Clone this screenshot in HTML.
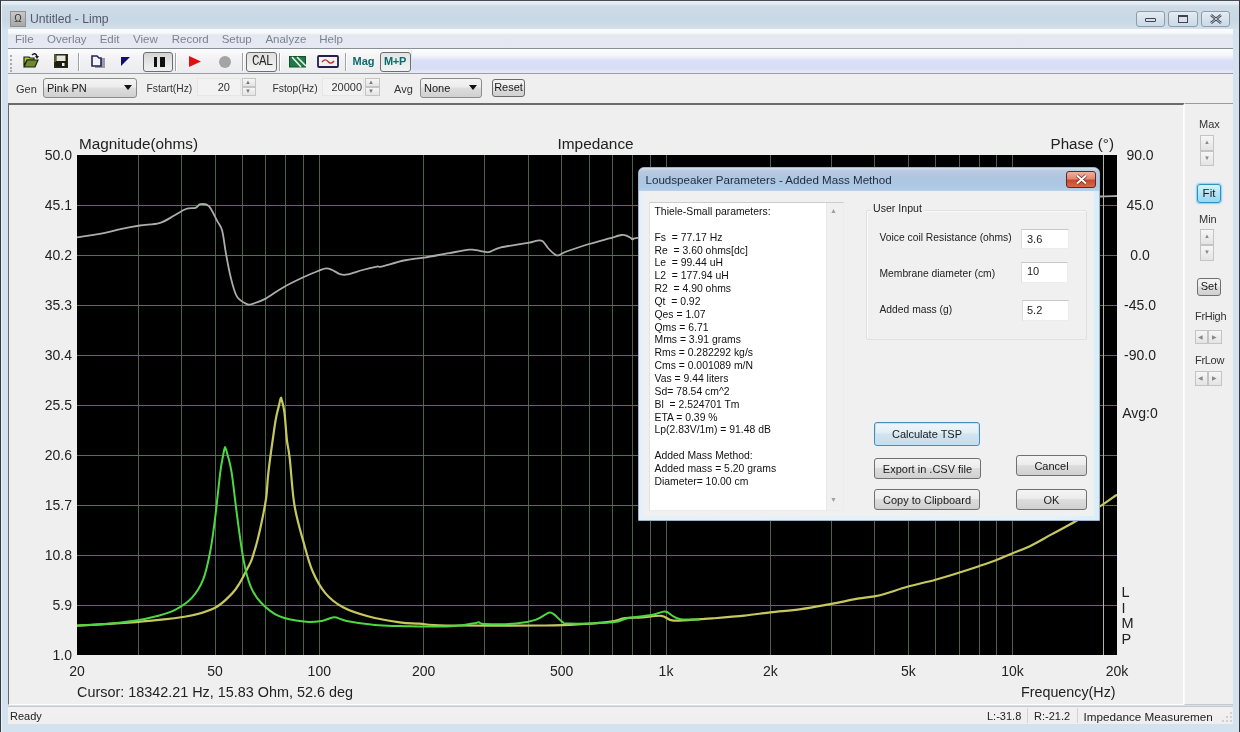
<!DOCTYPE html>
<html><head><meta charset="utf-8">
<style>
html,body{margin:0;padding:0}
body{will-change:transform;width:1240px;height:732px;overflow:hidden;position:relative;background:#f0f0f0;font-family:"Liberation Sans",sans-serif;color:#1e1e1e}
div,span{box-sizing:border-box}
.a{position:absolute}
.t{position:absolute;white-space:nowrap;line-height:1}
.yl{position:absolute;left:20px;width:52px;text-align:right;font-size:14px;line-height:18px;color:#222;white-space:nowrap}
.pl{position:absolute;left:1100px;width:80px;text-align:center;font-size:14px;line-height:18px;color:#222;white-space:nowrap}
.xl{position:absolute;top:662px;width:60px;text-align:center;font-size:14px;line-height:18px;color:#222;white-space:nowrap}
.sep{position:absolute;width:2px;background:#9ea2aa;border-right:1px solid #fff}
.btn{position:absolute;border:1px solid #707070;border-radius:3px;background:linear-gradient(#f4f4f4 0%,#ececec 45%,#dddddd 50%,#d0d0d0 100%);font-size:11px;text-align:center;color:#1a1a1a;white-space:nowrap}
.spin{position:absolute;border:1px solid #c4c4c4;background:linear-gradient(#f6f6f6,#e4e4e4)}
.edit{position:absolute;background:#fff;border:1px solid #ececec;border-top-color:#c8c8c8;border-left-color:#dcdcdc;font-size:11px;white-space:nowrap}
</style></head>
<body>
<!-- window frame -->
<div class="a" style="left:0;top:0;width:1240px;height:732px;background:#d4e1ee"></div>
<div class="a" style="left:1px;top:1px;width:1238px;height:28px;background:linear-gradient(#e9eff5 0px,#e2eaf2 3px,#cddbe7 5px,#c9d8e5 20px,#d3e0ea 28px)"></div>
<div class="a" style="left:0;top:0;width:1240px;height:1px;background:#474d58"></div>
<div class="a" style="left:0;top:0;width:1px;height:732px;background:#353a42"></div>
<div class="a" style="left:1239px;top:0;width:1px;height:732px;background:#353a42"></div>
<div class="a" style="left:1px;top:1px;width:1px;height:731px;background:#eef3f8"></div>
<!-- title -->
<div class="a" style="left:10px;top:11px;width:16px;height:16px;background:linear-gradient(#c8c8c8,#a8a8a8);border:1px solid #909090;font-size:10px;line-height:14px;text-align:center;color:#333">&#937;</div>
<div class="t" style="left:30px;top:13px;font-size:12.2px;color:#525a6a">Untitled - Limp</div>
<div class="a" style="left:1136px;top:11px;width:29px;height:16px;border:1px solid #8e9cab;border-radius:3px;background:linear-gradient(rgba(255,255,255,.5),rgba(200,215,230,.4))"></div>
<div class="a" style="left:1145px;top:18px;width:11px;height:4px;border:1.5px solid #3c4450;border-radius:1px;background:#dde"></div>
<div class="a" style="left:1168px;top:11px;width:30px;height:16px;border:1px solid #8e9cab;border-radius:3px;background:linear-gradient(rgba(255,255,255,.5),rgba(200,215,230,.4))"></div>
<div class="a" style="left:1178px;top:15px;width:10px;height:8px;border:1.5px solid #3c4450;border-top-width:2.5px;background:#dde"></div>
<div class="a" style="left:1201px;top:11px;width:29px;height:16px;border:1px solid #8e9cab;border-radius:3px;background:linear-gradient(rgba(255,255,255,.5),rgba(200,215,230,.4))"></div>
<svg class="a" style="left:1209px;top:13px" width="14" height="12"><path d="M2 2 L12 10 M12 2 L2 10" stroke="#3c4450" stroke-width="2.6"/><path d="M2 2 L12 10 M12 2 L2 10" stroke="#e8eef4" stroke-width="0.8"/></svg>

<!-- menu bar -->
<div class="a" style="left:8px;top:29px;width:1225px;height:20px;background:linear-gradient(#fbfcfd 0px,#f6f8fa 4px,#e4e8f0 6px,#e6e9f1 19px);border-bottom:1px solid #8a9098"></div>
<div class="t" style="left:15px;top:34px;font-size:11.5px;color:#7c8290">File</div>
<div class="t" style="left:47px;top:34px;font-size:11.5px;color:#7c8290">Overlay</div>
<div class="t" style="left:99.7px;top:34px;font-size:11.5px;color:#7c8290">Edit</div>
<div class="t" style="left:133px;top:34px;font-size:11.5px;color:#7c8290">View</div>
<div class="t" style="left:171.7px;top:34px;font-size:11.5px;color:#7c8290">Record</div>
<div class="t" style="left:221.7px;top:34px;font-size:11.5px;color:#7c8290">Setup</div>
<div class="t" style="left:265.4px;top:34px;font-size:11.5px;color:#7c8290">Analyze</div>
<div class="t" style="left:319.3px;top:34px;font-size:11.5px;color:#7c8290">Help</div>

<!-- toolbar 1 -->
<div class="a" style="left:8px;top:49px;width:1225px;height:25px;background:linear-gradient(#fdfdfe 0px,#f6f7fb 6px,#dadef6 12px,#d8dcf4 19px,#e6e8f6 23px);border-bottom:1px solid #9a9ea8"></div>
<div class="a" style="left:8px;top:50px;width:404px;height:23px;background:linear-gradient(#fbfbfc,#f2f2f4 40%,#ececef);border-right:1px solid #e4e4ea"></div>
<div class="a" style="left:10px;top:55px;width:2px;height:2px;background:#a8aab8"></div>
<div class="a" style="left:10px;top:59px;width:2px;height:2px;background:#a8aab8"></div>
<div class="a" style="left:10px;top:63px;width:2px;height:2px;background:#a8aab8"></div>
<div class="a" style="left:10px;top:67px;width:2px;height:2px;background:#a8aab8"></div>
<div class="a" style="left:10px;top:70px;width:2px;height:2px;background:#a8aab8"></div>
<!-- open folder -->
<svg class="a" style="left:22px;top:52px" width="18" height="17"><path d="M2 5 L7 5 L8 6 L12 6 L12 8 L5 8 L2 14 Z" fill="#a6d040" stroke="#1e2410" stroke-width="1.2"/><path d="M5 8 L16 8 L13 15 L2 15 Z" fill="#6e8a2a" stroke="#1e2410" stroke-width="1.2"/><path d="M10 3 Q13 0 15 4" fill="none" stroke="#1a1a1a" stroke-width="1.5"/><path d="M13 4 L17 4 L15 7 Z" fill="#1a1a1a"/></svg>
<!-- save -->
<svg class="a" style="left:54px;top:54px" width="14" height="14"><rect x="0.7" y="0.7" width="12.6" height="12.6" fill="#1c1c10" stroke="#2a2a18" stroke-width="1.4"/><rect x="2.5" y="1.5" width="9" height="5.5" fill="#e8e8d8"/><rect x="0" y="0" width="2" height="8" fill="#5a5a30"/><rect x="8" y="9" width="2.5" height="3" fill="#f4f4f4"/></svg>
<div class="sep" style="left:78px;top:53px;height:18px"></div>
<!-- copy -->
<svg class="a" style="left:91px;top:55px" width="15" height="13"><rect x="4" y="3" width="10" height="10" fill="#9a9aa8"/><path d="M1 1 L6 1 L8 3 L10 3 L10 11 L1 11 Z" fill="#f4f2fa" stroke="#24245a" stroke-width="1.6"/></svg>
<!-- navy triangle -->
<svg class="a" style="left:120px;top:56px" width="12" height="12"><path d="M1 1 L10 1 L1 10 Z" fill="#10106a"/></svg>
<!-- pause button -->
<div class="a" style="left:143px;top:52px;width:30px;height:20px;border:1px solid #6e6e6e;border-radius:3px;background:linear-gradient(#d4d4d4,#e8e8e8 60%,#f0f0f0)"></div>
<div class="a" style="left:154px;top:57px;width:3px;height:10px;background:#111"></div>
<div class="a" style="left:160px;top:57px;width:4.5px;height:10px;background:#111"></div>
<div class="sep" style="left:175px;top:53px;height:18px"></div>
<svg class="a" style="left:188px;top:55px" width="15" height="14"><path d="M1 1 L13 6.5 L1 12 Z" fill="#e01010"/></svg>
<div class="a" style="left:219px;top:55.5px;width:12px;height:12px;border-radius:6px;background:#a4a4a4"></div>
<div class="sep" style="left:242px;top:53px;height:18px"></div>
<div class="a" style="left:246px;top:52px;width:31px;height:20px;border:1px solid #6e6e6e;border-radius:3px;background:linear-gradient(#e0e0e0,#f4f4f4)"></div>
<div class="t" style="left:252px;top:56px;font-family:'Liberation Mono',monospace;font-size:12.5px;color:#2a2a2a;letter-spacing:-0.6px;transform:scaleY(1.12)">CAL</div>
<div class="sep" style="left:279px;top:53px;height:18px"></div>
<svg class="a" style="left:289px;top:56px" width="18" height="12"><rect x="0.5" y="0.5" width="16" height="10.5" fill="#207848" stroke="#145030" stroke-width="1"/><path d="M3 1 L12 11 M8 1 L17 10" stroke="#e8f4e8" stroke-width="1.6"/></svg>
<svg class="a" style="left:317px;top:55px" width="23" height="13"><rect x="1" y="1" width="20" height="11" rx="1" fill="#f6eef4" stroke="#20204a" stroke-width="1.8"/><path d="M5 7 Q8 3 11 6.5 Q14 10 17 6" fill="none" stroke="#b03020" stroke-width="1.3"/></svg>
<div class="sep" style="left:345px;top:53px;height:18px"></div>
<div class="t" style="left:352.5px;top:56px;font-size:11px;font-weight:bold;color:#0f6a6a">Mag</div>
<div class="a" style="left:380px;top:52px;width:31px;height:20px;border:1px solid #6e6e6e;border-radius:3px;background:linear-gradient(#dfe5e5,#f2f4f4)"></div>
<div class="t" style="left:384px;top:56px;font-size:11px;font-weight:bold;color:#0f6a6a;letter-spacing:-0.3px">M+P</div>

<!-- toolbar 2 -->
<div class="a" style="left:8px;top:74px;width:1225px;height:30px;background:#efefef;border-bottom:1px solid #6c6c6c"></div>
<div class="t" style="left:16px;top:84px;font-size:11px;color:#333">Gen</div>
<div class="btn" style="left:43px;top:78px;width:94px;height:20px;text-align:left;padding-left:3px;line-height:19px;border-color:#8c8c8c">Pink PN</div>
<svg class="a" style="left:124px;top:85px" width="9" height="6"><path d="M0 0 L8 0 L4 5 Z" fill="#111"/></svg>
<div class="t" style="left:146.5px;top:84px;font-size:10.3px;color:#333">Fstart(Hz)</div>
<div class="a" style="left:197px;top:78px;width:44px;height:18px;background:#f2f2f2;border:1px solid #e6e6e6"></div>
<div class="t" style="left:197px;top:82px;width:33px;text-align:right;font-size:11px;color:#333">20</div>
<div class="spin" style="left:241.5px;top:78px;width:14px;height:9px"></div>
<div class="spin" style="left:241.5px;top:87px;width:14px;height:9px"></div>
<div class="t" style="left:245px;top:79px;font-size:6px;color:#777">&#9650;</div>
<div class="t" style="left:245px;top:88px;font-size:6px;color:#777">&#9660;</div>
<div class="t" style="left:272.5px;top:84px;font-size:10.3px;color:#333">Fstop(Hz)</div>
<div class="a" style="left:322px;top:78px;width:42px;height:18px;background:#f2f2f2;border:1px solid #e6e6e6"></div>
<div class="t" style="left:322px;top:82px;width:40px;text-align:right;font-size:11px;color:#333">20000</div>
<div class="spin" style="left:364.5px;top:78px;width:15px;height:9px"></div>
<div class="spin" style="left:364.5px;top:87px;width:15px;height:9px"></div>
<div class="t" style="left:368px;top:79px;font-size:6px;color:#777">&#9650;</div>
<div class="t" style="left:368px;top:88px;font-size:6px;color:#777">&#9660;</div>
<div class="t" style="left:394px;top:84px;font-size:11px;color:#333">Avg</div>
<div class="btn" style="left:420px;top:78px;width:62px;height:20px;text-align:left;padding-left:3px;line-height:19px;border-color:#8c8c8c">None</div>
<svg class="a" style="left:469px;top:85px" width="9" height="6"><path d="M0 0 L8 0 L4 5 Z" fill="#111"/></svg>
<div class="btn" style="left:492px;top:79px;width:33px;height:18px;line-height:15px;border-color:#6a6a6a">Reset</div>

<!-- chart panel -->
<div class="a" style="left:8px;top:104px;width:1176px;height:601px;background:#efefef;border-left:1px solid #6a6a6a;border-top:1px solid #6a6a6a;border-right:1px solid #fff;border-bottom:1px solid #fff"></div>
<!-- right panel -->
<div class="a" style="left:1184px;top:103px;width:49px;height:602px;background:#efefef;border-left:1px solid #fafafa;border-top:1px solid #9a9a9a;border-bottom:1px solid #c8c8c8"></div>

<svg width="1240" height="732" style="position:absolute;left:0;top:0">
<defs><clipPath id="pc"><rect x="77" y="155" width="1040" height="500"/></clipPath></defs>
<rect x="77" y="155" width="1040" height="500" fill="#000"/>
<g clip-path="url(#pc)">
<line x1="138.5" y1="155" x2="138.5" y2="655" stroke="#4f6249" stroke-width="1"/>
<line x1="181.5" y1="155" x2="181.5" y2="655" stroke="#4f6249" stroke-width="1"/>
<line x1="215.5" y1="155" x2="215.5" y2="655" stroke="#4f6249" stroke-width="1"/>
<line x1="242.5" y1="155" x2="242.5" y2="655" stroke="#4f6249" stroke-width="1"/>
<line x1="265.5" y1="155" x2="265.5" y2="655" stroke="#4f6249" stroke-width="1"/>
<line x1="285.5" y1="155" x2="285.5" y2="655" stroke="#4f6249" stroke-width="1"/>
<line x1="303.5" y1="155" x2="303.5" y2="655" stroke="#4f6249" stroke-width="1"/>
<line x1="319.5" y1="155" x2="319.5" y2="655" stroke="#4f6249" stroke-width="1"/>
<line x1="423.5" y1="155" x2="423.5" y2="655" stroke="#4f6249" stroke-width="1"/>
<line x1="484.5" y1="155" x2="484.5" y2="655" stroke="#4f6249" stroke-width="1"/>
<line x1="528.5" y1="155" x2="528.5" y2="655" stroke="#4f6249" stroke-width="1"/>
<line x1="561.5" y1="155" x2="561.5" y2="655" stroke="#4f6249" stroke-width="1"/>
<line x1="589.5" y1="155" x2="589.5" y2="655" stroke="#4f6249" stroke-width="1"/>
<line x1="612.5" y1="155" x2="612.5" y2="655" stroke="#4f6249" stroke-width="1"/>
<line x1="632.5" y1="155" x2="632.5" y2="655" stroke="#4f6249" stroke-width="1"/>
<line x1="650.5" y1="155" x2="650.5" y2="655" stroke="#4f6249" stroke-width="1"/>
<line x1="666.5" y1="155" x2="666.5" y2="655" stroke="#4f6249" stroke-width="1"/>
<line x1="770.5" y1="155" x2="770.5" y2="655" stroke="#4f6249" stroke-width="1"/>
<line x1="831.5" y1="155" x2="831.5" y2="655" stroke="#4f6249" stroke-width="1"/>
<line x1="874.5" y1="155" x2="874.5" y2="655" stroke="#4f6249" stroke-width="1"/>
<line x1="908.5" y1="155" x2="908.5" y2="655" stroke="#4f6249" stroke-width="1"/>
<line x1="935.5" y1="155" x2="935.5" y2="655" stroke="#4f6249" stroke-width="1"/>
<line x1="959.5" y1="155" x2="959.5" y2="655" stroke="#4f6249" stroke-width="1"/>
<line x1="979.5" y1="155" x2="979.5" y2="655" stroke="#4f6249" stroke-width="1"/>
<line x1="996.5" y1="155" x2="996.5" y2="655" stroke="#4f6249" stroke-width="1"/>
<line x1="1012.5" y1="155" x2="1012.5" y2="655" stroke="#4f6249" stroke-width="1"/>
<line x1="77" y1="205.5" x2="1117" y2="205.5" stroke="#4e784c" stroke-width="1"/>
<line x1="77" y1="255.5" x2="1117" y2="255.5" stroke="#4e784c" stroke-width="1"/>
<line x1="77" y1="305.5" x2="1117" y2="305.5" stroke="#4e784c" stroke-width="1"/>
<line x1="77" y1="355.5" x2="1117" y2="355.5" stroke="#4e784c" stroke-width="1"/>
<line x1="77" y1="405.5" x2="1117" y2="405.5" stroke="#4e784c" stroke-width="1"/>
<line x1="77" y1="455.5" x2="1117" y2="455.5" stroke="#4e784c" stroke-width="1"/>
<line x1="77" y1="505.5" x2="1117" y2="505.5" stroke="#4e784c" stroke-width="1"/>
<line x1="77" y1="555.5" x2="1117" y2="555.5" stroke="#4e784c" stroke-width="1"/>
<line x1="77" y1="605.5" x2="1117" y2="605.5" stroke="#4e784c" stroke-width="1"/>
<line x1="1103.5" y1="155" x2="1103.5" y2="655" stroke="#b8b898" stroke-width="1"/>
<path d="M77.0,237.3 C81.0,236.7 94.0,235.1 101.2,233.7 C108.5,232.3 114.0,230.5 120.5,229.1 C127.0,227.7 133.4,226.5 139.9,225.5 C146.4,224.5 153.7,224.7 159.3,223.1 C165.0,221.5 169.4,218.2 173.8,215.8 C178.2,213.5 182.3,210.3 185.9,209.0 C189.5,207.7 193.2,208.6 195.6,207.8 C198.0,207.0 198.2,204.5 200.4,204.2 C202.6,203.9 206.1,203.3 208.9,206.1 C211.7,208.9 215.1,217.0 217.3,221.1 C219.5,225.2 220.8,225.6 222.2,230.8 C223.6,236.1 224.4,244.9 225.8,252.6 C227.2,260.3 228.8,269.6 230.6,276.8 C232.4,284.1 234.1,291.6 236.7,296.1 C239.3,300.6 243.8,302.6 246.4,303.9 C249.0,305.2 249.2,304.8 252.4,303.9 C255.6,303.0 260.6,301.3 265.7,298.6 C270.8,295.9 276.2,291.3 282.7,287.7 C289.1,284.1 298.3,279.6 304.4,276.8 C310.4,274.0 315.4,272.1 319.0,270.7 C322.6,269.3 324.0,268.4 326.2,268.3 C328.4,268.2 329.9,269.0 332.3,270.0 C334.7,271.0 338.1,273.7 340.7,274.4 C343.3,275.1 344.4,275.1 348.0,274.4 C351.6,273.7 357.7,271.3 362.5,270.0 C367.3,268.7 373.9,267.2 377.0,266.6 C380.1,266.0 376.8,267.6 381.3,266.6 C385.8,265.6 396.8,262.0 403.9,260.5 C411.0,259.0 416.7,258.8 424.2,257.6 C431.7,256.4 441.5,254.4 449.0,253.1 C456.5,251.8 464.8,250.2 469.3,249.7 C473.8,249.2 473.5,249.7 476.1,250.1 C478.8,250.5 482.9,251.6 485.2,251.9 C487.5,252.2 487.1,252.7 489.7,251.9 C492.3,251.2 494.6,248.9 501.0,247.4 C507.4,245.9 522.0,244.0 528.0,242.9 C534.0,241.8 534.6,240.9 537.1,240.6 C539.6,240.3 540.8,240.0 542.7,241.3 C544.6,242.6 546.3,246.3 548.4,248.5 C550.5,250.7 553.4,253.5 555.1,254.6 C556.8,255.7 556.6,255.8 558.5,255.3 C560.4,254.8 561.3,253.4 566.4,251.5 C571.5,249.6 581.9,246.2 589.0,244.0 C596.1,241.8 603.8,239.9 609.3,238.4 C614.8,236.9 618.7,235.4 621.7,235.0 C624.7,234.6 625.5,235.4 627.4,236.1 C629.3,236.8 631.3,238.8 633.0,239.1 C634.7,239.4 626.4,239.4 637.6,237.9 C648.8,236.4 656.3,234.3 700.0,230.0 C743.7,225.7 835.8,217.3 900.0,212.0 C964.2,206.7 1051.7,200.6 1085.0,198.0 C1118.3,195.4 1094.7,196.8 1100.0,196.5 C1105.3,196.2 1114.2,196.1 1117.0,196.0" fill="none" stroke="#acacac" stroke-width="1.8" stroke-linejoin="round"/>
<path d="M77.0,625.7 C84.2,625.3 108.0,623.9 120.0,623.1 C131.9,622.3 137.7,621.9 148.7,620.8 C159.7,619.7 175.0,618.6 186.0,616.5 C197.0,614.4 207.0,611.7 214.7,607.9 C222.4,604.1 227.8,597.8 232.0,593.6 C236.2,589.4 237.1,587.3 240.0,582.5 C242.9,577.7 247.1,569.0 249.2,564.9 C251.3,560.8 251.0,561.9 252.4,557.6 C253.8,553.3 256.1,545.9 257.8,539.0 C259.5,532.1 261.4,523.7 262.8,516.5 C264.2,509.3 265.5,503.4 266.4,496.0 C267.3,488.6 267.3,481.7 268.4,472.4 C269.4,463.1 271.4,449.1 272.7,440.0 C274.0,430.9 274.9,423.9 276.0,418.0 C277.1,412.1 278.4,408.0 279.1,404.9 C279.8,401.8 280.0,400.7 280.3,399.5 C280.6,398.3 280.7,397.8 280.9,397.8 C281.1,397.8 281.0,397.1 281.6,399.5 C282.2,401.9 283.5,405.2 284.4,412.0 C285.3,418.8 286.0,432.3 286.9,440.0 C287.8,447.7 288.4,447.3 289.7,458.2 C291.0,469.1 292.1,491.4 294.5,505.6 C296.9,519.8 300.8,532.4 303.9,543.4 C306.9,554.4 309.2,563.5 312.8,571.8 C316.4,580.1 320.3,587.2 325.3,593.1 C330.3,599.0 335.9,603.4 343.0,607.3 C350.1,611.1 358.4,613.7 367.9,616.2 C377.4,618.7 391.3,621.1 399.9,622.3 C408.5,623.5 411.7,623.1 419.4,623.6 C427.1,624.1 425.0,625.2 446.0,625.5 C467.0,625.8 522.2,625.8 545.2,625.5 C568.2,625.2 573.0,624.6 583.9,624.0 C594.8,623.4 603.6,622.6 610.5,621.6 C617.4,620.6 619.8,618.9 625.0,618.2 C630.2,617.5 636.0,617.9 642.0,617.5 C648.0,617.1 656.1,615.3 661.3,615.8 C666.5,616.3 666.9,620.0 673.4,620.6 C679.9,621.2 693.5,619.6 700.0,619.2 C706.5,618.8 704.9,619.0 712.3,618.4 C719.7,617.8 734.8,616.6 744.5,615.6 C754.2,614.6 760.9,613.5 770.3,612.4 C779.7,611.3 790.8,610.6 801.0,609.2 C811.2,607.8 822.2,605.6 831.6,603.9 C841.0,602.1 849.3,600.2 857.4,598.7 C865.5,597.2 871.7,597.2 880.0,595.2 C888.3,593.2 898.0,589.4 907.3,586.8 C916.5,584.2 926.9,582.1 935.5,579.7 C944.1,577.4 951.5,575.0 958.7,572.7 C965.9,570.5 972.7,568.3 978.9,566.2 C985.1,564.1 990.5,562.3 996.0,560.2 C1001.5,558.1 1006.2,556.0 1012.1,553.5 C1018.0,551.0 1024.7,548.6 1031.3,545.4 C1037.9,542.2 1044.1,538.4 1051.5,534.4 C1058.9,530.4 1067.2,526.2 1075.6,521.3 C1084.0,516.4 1095.3,509.3 1101.9,505.1 C1108.5,500.9 1112.5,497.8 1115.0,496.0 C1117.5,494.2 1116.7,494.8 1117.0,494.6" fill="none" stroke="#c6c85e" stroke-width="2.2" stroke-linejoin="round"/>
<path d="M77.0,625.7 C81.8,625.4 96.1,624.8 105.7,624.0 C115.3,623.2 125.8,622.1 134.4,620.8 C143.0,619.5 150.6,617.8 157.3,616.0 C164.0,614.2 168.8,613.2 174.6,610.2 C180.3,607.2 187.0,603.1 191.8,597.9 C196.6,592.7 200.2,587.1 203.3,579.2 C206.4,571.3 208.4,561.0 210.4,550.5 C212.4,540.0 213.7,529.5 215.3,516.5 C216.9,503.6 218.9,483.1 220.2,472.8 C221.5,462.6 222.5,459.0 223.2,455.0 C223.9,451.0 224.1,450.3 224.4,449.0 C224.7,447.7 224.8,447.1 225.1,447.1 C225.3,447.1 225.5,447.7 225.9,449.0 C226.3,450.3 226.6,451.0 227.6,455.0 C228.6,459.0 230.1,462.6 231.7,472.8 C233.3,483.1 235.2,502.1 237.2,516.5 C239.1,530.9 241.2,547.5 243.4,559.1 C245.6,570.8 247.7,579.2 250.6,586.4 C253.5,593.6 255.9,597.2 260.6,602.2 C265.4,607.2 271.9,613.0 279.1,616.2 C286.3,619.4 296.8,620.8 303.9,621.6 C311.0,622.4 316.7,621.6 321.7,620.9 C326.7,620.2 330.0,617.3 334.1,617.3 C338.2,617.3 339.8,619.6 346.6,620.9 C353.4,622.2 366.1,624.2 375.0,625.1 C383.9,626.0 388.2,625.8 400.0,626.0 C411.8,626.2 433.9,626.9 446.0,626.5 C458.1,626.1 467.2,624.3 472.6,623.6 C478.0,622.9 476.6,622.2 478.6,622.3 C480.6,622.4 478.4,623.8 484.7,624.0 C490.9,624.2 507.6,624.3 516.1,623.6 C524.6,622.9 530.0,621.7 535.5,619.9 C541.0,618.1 545.6,613.5 548.8,612.7 C552.0,611.9 552.7,613.6 554.9,615.1 C557.1,616.6 559.7,620.2 562.1,621.6 C564.5,623.0 560.9,623.5 569.4,623.6 C577.9,623.7 603.2,623.2 612.9,622.3 C622.6,621.4 620.9,619.4 627.4,618.2 C633.9,617.0 645.4,616.2 651.6,615.1 C657.9,614.0 661.3,611.3 664.9,611.5 C668.5,611.7 670.8,615.0 673.4,616.3 C676.0,617.6 676.3,618.7 680.7,619.2 C685.1,619.8 696.8,619.5 700.0,619.6" fill="none" stroke="#4cd840" stroke-width="2" stroke-linejoin="round"/>
</g></svg>
<div class="t" style="left:79px;top:136px;font-size:15.3px;color:#222">Magnitude(ohms)</div>
<div class="t" style="left:557.5px;top:136px;font-size:15.4px;color:#222">Impedance</div>
<div class="t" style="left:1050.5px;top:136px;font-size:15.2px;color:#222">Phase (&deg;)</div>
<div class="yl" style="top:146px">50.0</div>
<div class="yl" style="top:196px">45.1</div>
<div class="yl" style="top:246px">40.2</div>
<div class="yl" style="top:296px">35.3</div>
<div class="yl" style="top:346px">30.4</div>
<div class="yl" style="top:396px">25.5</div>
<div class="yl" style="top:446px">20.6</div>
<div class="yl" style="top:496px">15.7</div>
<div class="yl" style="top:546px">10.8</div>
<div class="yl" style="top:596px">5.9</div>
<div class="yl" style="top:646px">1.0</div>
<div class="pl" style="top:146px">90.0</div>
<div class="pl" style="top:196px">45.0</div>
<div class="pl" style="top:246px">0.0</div>
<div class="pl" style="top:296px">-45.0</div>
<div class="pl" style="top:346px">-90.0</div>
<div class="pl" style="top:404px">Avg:0</div>
<div class="xl" style="left:47.0px">20</div>
<div class="xl" style="left:185.0px">50</div>
<div class="xl" style="left:289.3px">100</div>
<div class="xl" style="left:393.7px">200</div>
<div class="xl" style="left:531.6px">500</div>
<div class="xl" style="left:636.0px">1k</div>
<div class="xl" style="left:740.3px">2k</div>
<div class="xl" style="left:878.3px">5k</div>
<div class="xl" style="left:982.6px">10k</div>
<div class="xl" style="left:1087.0px">20k</div>
<div class="t" style="left:1121.5px;top:585px;width:16px;text-align:left;font-size:14.5px;line-height:15.6px;color:#222;white-space:normal">L<br>I<br>M<br>P</div>
<div class="t" style="left:77px;top:685px;font-size:14.4px;color:#222">Cursor: 18342.21 Hz, 15.83 Ohm, 52.6 deg</div>
<div class="t" style="left:1021px;top:685px;font-size:14.3px;color:#222">Frequency(Hz)</div>

<!-- right panel controls -->
<div class="t" style="left:1199px;top:119px;font-size:11px;color:#333">Max</div>
<div class="spin" style="left:1200px;top:135px;width:14px;height:16px"></div>
<div class="spin" style="left:1200px;top:151px;width:14px;height:15px"></div>
<div class="t" style="left:1204px;top:139px;font-size:6px;color:#888">&#9650;</div>
<div class="t" style="left:1204px;top:155px;font-size:6px;color:#888">&#9660;</div>
<div class="btn" style="left:1197px;top:184px;width:24px;height:19px;line-height:17px;border-color:#2f8fc0;background:linear-gradient(#d6f2fc,#b4e4f6 50%,#98d8f0);box-shadow:0 0 1.5px 1px #7fd4f4;font-size:11.5px">Fit</div>
<div class="t" style="left:1199px;top:214px;font-size:11px;color:#333">Min</div>
<div class="spin" style="left:1200px;top:229px;width:14px;height:16px"></div>
<div class="spin" style="left:1200px;top:245px;width:14px;height:16px"></div>
<div class="t" style="left:1204px;top:233px;font-size:6px;color:#888">&#9650;</div>
<div class="t" style="left:1204px;top:249px;font-size:6px;color:#888">&#9660;</div>
<div class="btn" style="left:1197px;top:278px;width:24px;height:18px;line-height:15px">Set</div>
<div class="t" style="left:1195px;top:311px;font-size:11px;color:#333;letter-spacing:-0.3px">FrHigh</div>
<div class="spin" style="left:1195px;top:330px;width:13px;height:14px"></div>
<div class="spin" style="left:1208px;top:330px;width:14px;height:14px"></div>
<div class="t" style="left:1198px;top:334px;font-size:6px;color:#888">&#9664;</div>
<div class="t" style="left:1212px;top:334px;font-size:6px;color:#888">&#9654;</div>
<div class="t" style="left:1195px;top:355px;font-size:11px;color:#333;letter-spacing:-0.3px">FrLow</div>
<div class="spin" style="left:1195px;top:371px;width:13px;height:15px"></div>
<div class="spin" style="left:1208px;top:371px;width:14px;height:15px"></div>
<div class="t" style="left:1198px;top:375px;font-size:6px;color:#888">&#9664;</div>
<div class="t" style="left:1212px;top:375px;font-size:6px;color:#888">&#9654;</div>

<!-- status bar -->
<div class="a" style="left:8px;top:706px;width:1225px;height:18px;background:linear-gradient(#f2f0f0,#f0eeee);border-top:1px solid #c8c8c8"></div>
<div class="t" style="left:10px;top:711px;font-size:11px;color:#222">Ready</div>
<div class="t" style="left:987px;top:711px;font-size:11px;color:#222">L:-31.8</div>
<div class="a" style="left:1027px;top:708px;width:1px;height:15px;background:#d4d4d4"></div>
<div class="t" style="left:1034px;top:711px;font-size:11px;color:#222">R:-21.2</div>
<div class="a" style="left:1077px;top:708px;width:1px;height:15px;background:#d4d4d4"></div>
<div class="t" style="left:1083.5px;top:711px;font-size:11.7px;color:#222">Impedance Measuremen</div>

<svg class="a" style="left:1222px;top:712px" width="11" height="11"><g fill="#d0d0d0"><rect x="8" y="0" width="2" height="2"/><rect x="4" y="4" width="2" height="2"/><rect x="8" y="4" width="2" height="2"/><rect x="0" y="8" width="2" height="2"/><rect x="4" y="8" width="2" height="2"/><rect x="8" y="8" width="2" height="2"/></g></svg>
<!-- dialog -->
<div class="a" style="left:638px;top:167px;width:462px;height:354px;border:1px solid #9fb4c8;border-radius:6px 6px 0 0;background:linear-gradient(90deg,#e6f0f8,#e4f2fa 90%,#d8eef8)"></div>
<div class="a" style="left:639px;top:168px;width:460px;height:23px;border-radius:5px 5px 0 0;background:linear-gradient(#d4e0ec 0px,#b8cadf 3px,#aec6e0 10px,#adc9e6 20px,#b8d2ea 23px)"></div>
<div class="t" style="left:645.5px;top:174px;font-size:11.6px;color:#1c2a40">Loudspeaker Parameters - Added Mass Method</div>
<div class="a" style="left:1066px;top:171px;width:30px;height:17px;border:1px solid #5a2a20;border-radius:3px;background:linear-gradient(#f0b0a0 0%,#e08a70 45%,#c8482e 55%,#d86848 100%)"></div>
<svg class="a" style="left:1074px;top:173px" width="15" height="13"><path d="M3 2.5 L12 10.5 M12 2.5 L3 10.5" stroke="#6a2418" stroke-width="3.4"/><path d="M3 2.5 L12 10.5 M12 2.5 L3 10.5" stroke="#fff" stroke-width="2"/></svg>
<div class="a" style="left:643px;top:191px;width:451px;height:325px;background:#f0f0f0"></div>
<!-- listbox -->
<div class="a" style="left:649px;top:202px;width:195px;height:309px;background:#fff;border:1px solid #e2e2e2;border-top-color:#cccccc;border-right-color:#ececec;border-bottom-color:#ececec"></div>
<div class="a" style="left:826px;top:203px;width:17px;height:307px;background:#f0f0f0;border-left:1px solid #e8e8e8"></div>
<div class="t" style="left:830px;top:207px;font-size:7px;color:#a0a0a0">&#9650;</div>
<div class="t" style="left:830px;top:496px;font-size:7px;color:#a0a0a0">&#9660;</div>
<div class="t" style="left:654.5px;top:206px;font-size:10.4px;line-height:12.85px;color:#111;white-space:nowrap">Thiele-Small parameters:<br><br>Fs&nbsp; = 77.17 Hz<br>Re&nbsp; = 3.60 ohms[dc]<br>Le&nbsp; = 99.44 uH<br>L2&nbsp; = 177.94 uH<br>R2&nbsp; = 4.90 ohms<br>Qt&nbsp; = 0.92<br>Qes = 1.07<br>Qms = 6.71<br>Mms = 3.91 grams<br>Rms = 0.282292 kg/s<br>Cms = 0.001089 m/N<br>Vas = 9.44 liters<br>Sd= 78.54 cm^2<br>Bl&nbsp; = 2.524701 Tm<br>ETA = 0.39 %<br>Lp(2.83V/1m) = 91.48 dB<br><br>Added Mass Method:<br>Added mass = 5.20 grams<br>Diameter= 10.00 cm</div>
<!-- user input group -->
<div class="a" style="left:866px;top:210px;width:221px;height:130px;border:1px solid #e0e0e0;border-radius:2px;box-shadow:inset 1px 1px 0 #fafafa"></div>
<div class="t" style="left:871px;top:203px;padding:0 2px;background:#f0f0f0;font-size:10.6px;color:#222">User Input</div>
<div class="t" style="left:879.5px;top:233px;font-size:10.3px;color:#222">Voice coil Resistance (ohms)</div>
<div class="edit" style="left:1021px;top:229px;width:48px;height:20px"></div>
<div class="t" style="left:1027px;top:234px;font-size:11px;color:#222">3.6</div>
<div class="t" style="left:879.5px;top:269px;font-size:10.3px;color:#222">Membrane diameter (cm)</div>
<div class="edit" style="left:1021px;top:262px;width:47px;height:21px"></div>
<div class="t" style="left:1027px;top:266px;font-size:11px;color:#222">10</div>
<div class="t" style="left:879.5px;top:305px;font-size:10.3px;color:#222">Added mass (g)</div>
<div class="edit" style="left:1022px;top:300px;width:47px;height:21px"></div>
<div class="t" style="left:1027px;top:305px;font-size:11px;color:#222">5.2</div>
<!-- dialog buttons -->
<div class="btn" style="left:874px;top:422px;width:106px;height:24px;line-height:23px;border-color:#4a8ab8;background:linear-gradient(#eef6fb 0%,#e2eef6 45%,#d2e4f0 50%,#c6dcec 100%);box-shadow:inset 0 0 0 1px #bfe4f8">Calculate TSP</div>
<div class="btn" style="left:874px;top:458px;width:107px;height:21px;line-height:20px">Export in .CSV file</div>
<div class="btn" style="left:874px;top:489px;width:106px;height:21px;line-height:20px">Copy to Clipboard</div>
<div class="btn" style="left:1016px;top:455px;width:71px;height:21px;line-height:20px">Cancel</div>
<div class="btn" style="left:1016px;top:489px;width:71px;height:21px;line-height:20px">OK</div>
</body></html>
